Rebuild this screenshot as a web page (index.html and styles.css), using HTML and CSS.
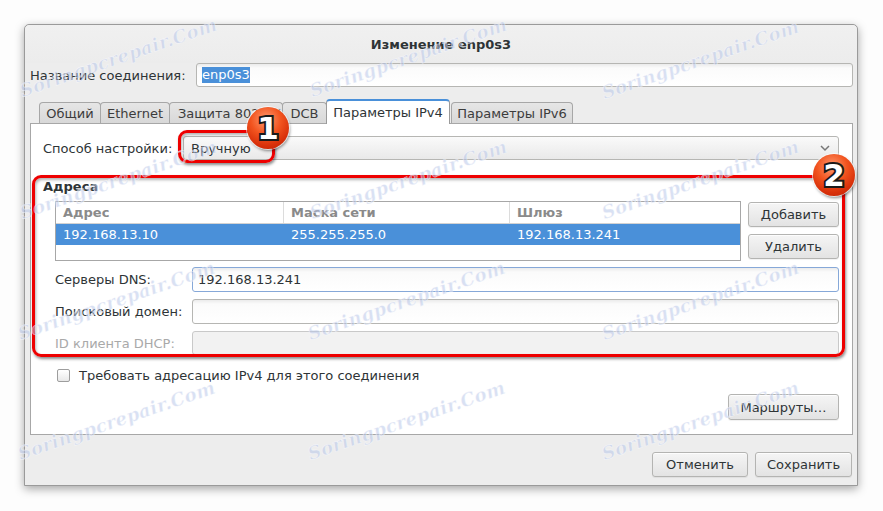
FILE: index.html
```html
<!DOCTYPE html>
<html lang="ru">
<head>
<meta charset="utf-8">
<title>Изменение enp0s3</title>
<link rel="stylesheet" href="styles.css">
</head>
<body>
<div class="dialog">
  <div class="titlebar">Изменение enp0s3</div>
  <div class="content">
    <div class="name-row">
      <span class="name-label">Название соединения:</span>
      <div class="entry name-entry"><span class="sel">enp0s3</span></div>
    </div>
    <div class="notebook">
      <div class="tabs">
        <div class="tab t1">Общий</div>
        <div class="tab t2">Ethernet</div>
        <div class="tab t3">Защита 802.1X</div>
        <div class="tab t4">DCB</div>
        <div class="tab t5 active">Параметры IPv4</div>
        <div class="tab t6">Параметры IPv6</div>
      </div>
      <div class="page">
        <div class="method-row">
          <span class="method-label">Способ настройки:</span>
          <div class="combo">
            <span>Вручную</span>
            <svg class="chev" width="10" height="7" viewBox="0 0 10 7"><path d="M1 1 L5 5 L9 1" fill="none" stroke="#777" stroke-width="1.5"/></svg>
          </div>
        </div>
        <div class="section-title">Адреса</div>
        <div class="section">
          <div class="addr-row">
            <div class="table">
              <div class="thead">
                <div class="th c1">Адрес</div>
                <div class="th c2">Маска сети</div>
                <div class="th c3">Шлюз</div>
              </div>
              <div class="tr selected">
                <div class="td c1">192.168.13.10</div>
                <div class="td c2">255.255.255.0</div>
                <div class="td c3">192.168.13.241</div>
              </div>
            </div>
            <div class="addr-buttons">
              <div class="btn">Добавить</div>
              <div class="btn">Удалить</div>
            </div>
          </div>
          <div class="form">
            <span class="flabel">Серверы DNS:</span>
            <div class="entry focused">192.168.13.241</div>
            <span class="flabel">Поисковый домен:</span>
            <div class="entry"></div>
            <span class="flabel disabled">ID клиента DHCP:</span>
            <div class="entry insensitive"></div>
          </div>
        </div>
        <div class="check-row">
          <span class="checkbox"></span>
          <span>Требовать адресацию IPv4 для этого соединения</span>
        </div>
        <div class="routes-row">
          <div class="btn routes">Маршруты…</div>
        </div>
      </div>
    </div>
    <div class="actions">
      <div class="btn cancel">Отменить</div>
      <div class="btn save">Сохранить</div>
    </div>
  </div>
</div>

<div class="marker box1"></div>
<div class="marker box2"></div>
<div class="badge badge1"><span>1</span></div>
<div class="badge badge2"><span>2</span></div>

<div class="wm w1">Soringpcrepair.Com</div>
<div class="wm w2">Soringpcrepair.Com</div>
<div class="wm w3">Soringpcrepair.Com</div>
<div class="wm w4">Soringpcrepair.Com</div>
<div class="wm w5">Soringpcrepair.Com</div>
<div class="wm w6">Soringpcrepair.Com</div>
<div class="wm w7">Soringpcrepair.Com</div>
<div class="wm w8">Soringpcrepair.Com</div>
<div class="wm w9">Soringpcrepair.Com</div>
<div class="wm w10">Soringpcrepair.Com</div>
<div class="wm w11">Soringpcrepair.Com</div>
<div class="wm w12">Soringpcrepair.Com</div>
</body>
</html>
```

FILE: styles.css
```css
* { box-sizing: border-box; }
html, body { margin: 0; padding: 0; }
body {
  width: 883px;
  height: 511px;
  background: #fdfdfd;
  font-family: "DejaVu Sans", sans-serif;
  font-size: 13px;
  color: #2e3436;
  overflow: hidden;
  position: relative;
}

.dialog {
  position: absolute;
  left: 24px;
  top: 24px;
  width: 834px;
  height: 462px;
  background: #ededed;
  border: 1px solid #9a9a9a;
  border-radius: 5px 5px 0 0;
  box-shadow: 0 3px 10px rgba(0,0,0,0.35);
  display: flex;
  flex-direction: column;
  z-index: 0;
}

.titlebar {
  height: 38px;
  display: flex;
  align-items: center;
  justify-content: center;
  font-weight: bold;
  color: #2e3436;
  background: linear-gradient(#f0f0f0, #ececec);
  border-radius: 5px 5px 0 0;
}

.content {
  padding: 0 4px 0 5px;
  display: flex;
  flex-direction: column;
}

.name-row {
  height: 24px;
  display: flex;
  align-items: center;
}
.name-label { width: 166px; }
.entry {
  height: 24px;
  flex: 1;
  border: 1px solid #b6b6b3;
  border-radius: 3px;
  background: linear-gradient(#ebebeb, #fbfbfb 4px, #ffffff);
  display: flex;
  align-items: center;
  padding-left: 5px;
}
.sel { background: #4a90d9; color: #fff; line-height: 16px; }

.notebook { margin-top: 12px; }
.tabs {
  height: 24px;
  display: flex;
  align-items: flex-end;
  padding-left: 9px;
  position: relative;
  z-index: 1;
}
.tab {
  height: 21px;
  padding: 0;
  display: flex;
  align-items: center;
  justify-content: center;
  white-space: nowrap;
  overflow: hidden;
  background: linear-gradient(#e6e6e6, #d8d8d8);
  border: 1px solid #a7a7a7;
  border-bottom: none;
  border-radius: 4px 4px 0 0;
  margin-right: -1px;
  color: #3c3c3c;
}
.tab.t1 { width: 62px; }
.tab.t2 { width: 70px; }
.tab.t3 { width: 114px; justify-content: flex-start; padding-left: 8px; }
.tab.t4 { width: 45px; }
.tab.t5 { width: 124px; }
.tab.t6 { width: 122px; margin-left: 2px; }
.tab.active {
  height: 25px;
  margin-bottom: -1px;
  background: #ffffff;
  border-color: #9a9a9a;
  border-top: 2px solid #4a90d9;
  color: #2e3436;
}

.page {
  height: 312px;
  background: #fff;
  border: 1px solid #a7a7a7;
  padding: 12px 13px 0 12px;
  display: flex;
  flex-direction: column;
}

.method-row {
  height: 24px;
  display: flex;
  align-items: center;
}
.method-label { width: 140px; }
.combo {
  flex: 1;
  height: 24px;
  border: 1px solid #b6b6b3;
  border-radius: 3px;
  background: linear-gradient(#fafafa, #e9e9e9);
  display: flex;
  align-items: center;
  justify-content: space-between;
  padding: 0 8px 0 7px;
}

.section-title {
  margin-top: 19px;
  line-height: 16px;
  font-weight: bold;
}
.section { padding-left: 12px; margin-top: 6px; }

.addr-row { display: flex; gap: 7px; }
.table {
  flex: 1;
  height: 60px;
  border: 1px solid #a7a7a7;
  background: #fff;
}
.thead {
  height: 22px;
  display: flex;
  border-bottom: 1px solid #d2d2d2;
}
.th {
  font-weight: bold;
  color: #8a8a8a;
  display: flex;
  align-items: center;
  padding-left: 7px;
}
.c1 { width: 227px; }
.c2 { width: 226px; }
.c3 { flex: 1; }
.th.c2, .th.c3 { border-left: 1px solid #dcdcdc; }
.tr {
  height: 21px;
  display: flex;
}
.tr.selected { background: #4a90d9; color: #fff; }
.td { display: flex; align-items: center; padding-left: 7px; }
.td.c2, .td.c3 { padding-left: 8px; }

.addr-buttons {
  width: 91px;
  display: flex;
  flex-direction: column;
  gap: 7px;
  padding-top: 1px;
}
.btn {
  height: 25px;
  border: 1px solid #b4b4b2;
  border-radius: 3px;
  background: linear-gradient(#f5f5f5, #e3e3e3);
  box-shadow: 0 1px 0 rgba(255,255,255,0.8) inset, 0 1px 1px rgba(0,0,0,0.06);
  display: flex;
  align-items: center;
  justify-content: center;
  color: #2e3436;
}

.form {
  margin-top: 6px;
  display: grid;
  grid-template-columns: 137px 1fr;
  row-gap: 7px;
  align-items: center;
}
.form .entry { height: 25px; }
.entry.focused { border-color: #86a8d8; }
.entry.insensitive { background: #f2f2f2; border-color: #c9c9c9; height: 24px; }
.flabel.disabled { color: #a9a9a9; }

.check-row {
  margin-top: 12px;
  height: 16px;
  display: flex;
  align-items: center;
  padding-left: 14px;
}
.checkbox {
  width: 13px;
  height: 13px;
  border: 1px solid #9d9d9d;
  border-radius: 2px;
  background: linear-gradient(#ffffff, #e8e8e8);
  margin-right: 9px;
}

.routes-row {
  margin-top: 11px;
  display: flex;
  justify-content: flex-end;
}
.routes { width: 111px; height: 26px; }

.actions {
  margin-top: 17px;
  display: flex;
  justify-content: flex-end;
  gap: 7px;
  padding-right: 1px;
}
.cancel { width: 96px; }
.save { width: 97px; }

/* annotation overlays */
.marker {
  position: absolute;
  z-index: 4;
  border: 3px solid #ee0000;
  border-radius: 9px;
  box-shadow: 1px 2px 3px rgba(0,0,0,0.45), inset 1px 2px 3px rgba(0,0,0,0.3);
}
.box1 { left: 178px; top: 130px; width: 97px; height: 33px; }
.box2 { left: 32px; top: 175px; width: 813px; height: 182px; }

.badge {
  position: absolute;
  z-index: 5;
  width: 42px;
  height: 42px;
  border-radius: 50%;
  background: radial-gradient(circle at 45% 30%, #ff9a70 0%, #f2541f 40%, #d8300a 70%, #b72205 100%);
  box-shadow: 0 0 0 1px rgba(255,255,255,0.7), 1px 2px 3px rgba(0,0,0,0.45);
  display: flex;
  align-items: center;
  justify-content: center;
}
.badge span {
  font-family: "DejaVu Sans", sans-serif;
  font-weight: bold;
  font-size: 31px;
  line-height: 31px;
  height: 31px;
  color: #fff;
  -webkit-text-stroke: 4px #1a1a1a;
  paint-order: stroke fill;
}
.badge1 { left: 247px; top: 107px; }
.badge2 { left: 813px; top: 154px; }

.wm {
  position: absolute;
  z-index: 6;
  width: 200px;
  margin-left: -100px;
  margin-top: -14px;
  text-align: center;
  font-family: "DejaVu Serif", serif;
  font-style: italic;
  font-weight: bold;
  font-size: 18px;
  line-height: 28px;
  color: rgba(180, 195, 232, 0.5);
  -webkit-text-stroke: 0.6px rgba(255,255,255,0.6);
  transform: rotate(-19deg);
  pointer-events: none;
  white-space: nowrap;
  letter-spacing: 0.3px;
}
.w1 { left: 115px; top: 59px; }
.w2 { left: 405px; top: 59px; }
.w3 { left: 697px; top: 61px; }
.w4 { left: 115px; top: 181px; }
.w5 { left: 405px; top: 181px; }
.w6 { left: 697px; top: 181px; }
.w7 { left: 113px; top: 302px; }
.w8 { left: 403px; top: 302px; }
.w9 { left: 697px; top: 302px; }
.w10 { left: 113px; top: 422px; }
.w11 { left: 403px; top: 422px; }
.w12 { left: 697px; top: 422px; }
```
